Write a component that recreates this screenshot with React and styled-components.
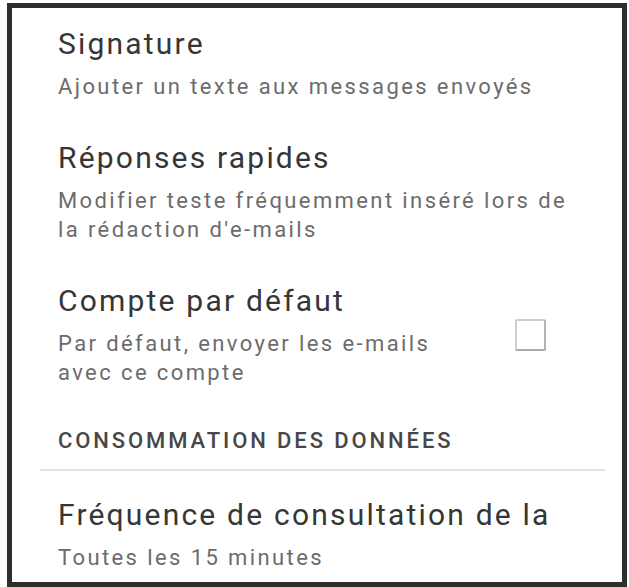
import React from "react";
import styled, { createGlobalStyle } from "styled-components";

const GlobalStyle = createGlobalStyle`
  html, body {
    margin: 0;
    padding: 0;
    background: #ffffff;
  }
  body {
    font-family: Roboto, "Noto Sans", "Liberation Sans", sans-serif;
  }
`;

const Frame = styled.div`
  box-sizing: border-box;
  width: 620px;
  height: 584px;
  margin: 3px 0 0 7px;
  border: 5px solid #2e2e2e;
  background: #ffffff;
  overflow: hidden;
`;

const Item = styled.div`
  display: flex;
  align-items: center;
  padding: ${(p) => p.top || 18}px 47px 21px 46px;
`;

const Texts = styled.div`
  flex: ${(p) => (p.narrow ? "0 1 420px" : "1")};
  min-width: 0;
`;

const Title = styled.div`
  font-size: 30px;
  line-height: 36px;
  letter-spacing: 2.2px;
  color: #363636;
  white-space: nowrap;
`;

const Summary = styled.div`
  margin-top: 10px;
  font-size: 22px;
  line-height: 29px;
  letter-spacing: 2.4px;
  color: #6c6c6c;
`;

const Checkbox = styled.div`
  box-sizing: border-box;
  width: 31px;
  height: 32px;
  margin-left: auto;
  margin-right: 29px;
  border: 2px solid #cfcfcf;
  border-right-color: #b4b4b4;
  border-bottom-color: #aaaaaa;
  border-radius: 2px;
`;

const Category = styled.div`
  padding: 18px 47px 0 46px;
  font-size: 22px;
  line-height: 29px;
  font-weight: 500;
  letter-spacing: 2.9px;
  color: #474747;
`;

const Divider = styled.div`
  height: 2px;
  margin: 14px 17px 0 28px;
  background: #e2e2e2;
`;

function Preference({ title, summary, checkbox, top }) {
  return (
    <Item top={top}>
      <Texts narrow={checkbox}>
        <Title>{title}</Title>
        <Summary>{summary}</Summary>
      </Texts>
      {checkbox && <Checkbox />}
    </Item>
  );
}

export default function App() {
  return (
    <>
      <GlobalStyle />
      <Frame>
        <Preference
          top={18}
          title="Signature"
          summary="Ajouter un texte aux messages envoyés"
        />
        <Preference
          title="Réponses rapides"
          summary="Modifier teste fréquemment inséré lors de la rédaction d'e-mails"
        />
        <Preference
          title="Compte par défaut"
          summary="Par défaut, envoyer les e-mails avec ce compte"
          checkbox
        />
        <Category>CONSOMMATION DES DONNÉES</Category>
        <Divider />
        <Preference
          top={26}
          title="Fréquence de consultation de la"
          summary="Toutes les 15 minutes"
        />
      </Frame>
    </>
  );
}
